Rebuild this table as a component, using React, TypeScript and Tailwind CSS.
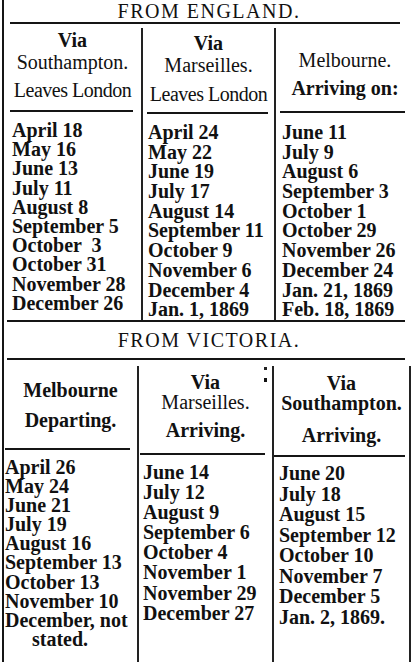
import React from 'react';

const serif = { fontFamily: '"Liberation Serif", "Times New Roman", serif' };

const upperCols = [
  [
    'April 18',
    'May 16',
    'June 13',
    'July 11',
    'August 8',
    'September 5',
    'October  3',
    'October 31',
    'November 28',
    'December 26',
  ],
  [
    'April 24',
    'May 22',
    'June 19',
    'July 17',
    'August 14',
    'September 11',
    'October 9',
    'November 6',
    'December 4',
    'Jan. 1, 1869',
  ],
  [
    'June 11',
    'July 9',
    'August 6',
    'September 3',
    'October 1',
    'October 29',
    'November 26',
    'December 24',
    'Jan. 21, 1869',
    'Feb. 18, 1869',
  ],
];

const lowerCols = [
  [
    'April 26',
    'May 24',
    'June 21',
    'July 19',
    'August 16',
    'September 13',
    'October 13',
    'November 10',
    'December, not',
  ],
  [
    'June 14',
    'July 12',
    'August 9',
    'September 6',
    'October 4',
    'November 1',
    'November 29',
    'December 27',
  ],
  [
    'June 20',
    'July 18',
    'August 15',
    'September 12',
    'October 10',
    'November 7',
    'December 5',
    'Jan. 2, 1869.',
  ],
];

function Rule({ className }: { className: string }) {
  return <div className={`h-[2px] bg-[#151515] ${className}`} />;
}

function Dates({ items, className }: { items: string[]; className: string }) {
  return (
    <div className={`whitespace-pre text-[20px] font-bold ${className}`}>
      {items.map((d) => (
        <div key={d}>{d}</div>
      ))}
    </div>
  );
}

export default function App() {
  return (
    <div className="h-[662px] w-[414px] overflow-hidden bg-white pl-[2px] text-[#111]" style={serif}>
      <div className="flex h-full flex-col border-l-2 border-[#151515]">
        {/* FROM ENGLAND */}
        <div className="h-[22px] text-center text-[20px] leading-[22px] tracking-[1.5px]">FROM ENGLAND.</div>
        <Rule className="ml-[6px] mr-[14px]" />

        <div className="mt-[4px] flex h-[292px]">
          <div className="flex w-[137px] flex-col">
            <div className="h-[82px] pt-[1px] text-center text-[20px] leading-[22px]">
              <div className="font-bold">Via</div>
              <div>Southampton.</div>
              <div className="mt-[6px] tracking-[-0.5px]">Leaves London</div>
            </div>
            <Rule className="ml-[6px] mr-[8px]" />
            <Dates items={upperCols[0]} className="mt-[9px] pl-[8px] leading-[19.2px]" />
          </div>

          <div className="flex w-[133px] flex-col border-l-2 border-[#222]">
            <div className="h-[84px] pt-[4px] text-center text-[20px] leading-[22px]">
              <div className="font-bold">Via</div>
              <div>Marseilles.</div>
              <div className="mt-[7px] tracking-[-0.5px]">Leaves London</div>
            </div>
            <Rule className="ml-[4px] mr-[6px]" />
            <Dates items={upperCols[1]} className="mt-[9px] pl-[5px] leading-[19.7px]" />
          </div>

          <div className="flex flex-1 flex-col border-l-2 border-[#222]">
            <div className="h-[88px] pt-[21px] text-center text-[20px] font-bold leading-[22px]">
              <div className="font-normal">Melbourne.</div>
              <div className="mt-[6px]">Arriving on:</div>
            </div>
            <Rule className="ml-[4px] mr-[9px]" />
            <Dates items={upperCols[2]} className="mt-[10px] pl-[6px] leading-[19.7px]" />
          </div>
        </div>

        <Rule className="ml-[3px] mr-[9px]" />

        {/* FROM VICTORIA */}
        <div className="h-[36px] text-center text-[20px] leading-[36px] tracking-[1.5px]">FROM VICTORIA.</div>
        <Rule className="ml-[3px] mr-[9px]" />

        <div className="mr-[3px] mt-[6px] flex flex-1 border-r-2 border-[#222]">
          <div className="flex w-[133px] flex-col">
            <div className="h-[82px] pt-[13px] text-center text-[20px] font-bold leading-[22px]">
              <div>Melbourne</div>
              <div className="mt-[8px]">Departing.</div>
            </div>
            <Rule className="ml-[1px] mr-[7px]" />
            <div className="mt-[8px] pl-[1px] text-[20px] font-bold leading-[19.1px]">
              {lowerCols[0].map((d) => (
                <div key={d}>{d}</div>
              ))}
              <div className="pl-[27px]">stated.</div>
            </div>
          </div>

          <div className="relative flex w-[135px] flex-col border-l-2 border-[#222]">
            <span className="absolute right-[5px] top-[1px] h-[3px] w-[3px] bg-[#222]" />
            <span className="absolute right-[5px] top-[12px] h-[4px] w-[3px] bg-[#111]" />
            <div className="h-[87px] pt-[6px] text-center text-[20px] leading-[20px]">
              <div className="font-bold">Via</div>
              <div>Marseilles.</div>
              <div className="mt-[8px] font-bold">Arriving.</div>
            </div>
            <Rule className="ml-[1px] mr-[7px]" />
            <Dates items={lowerCols[1]} className="mt-[7px] pl-[4px] leading-[20.1px]" />
          </div>

          <div className="flex flex-1 flex-col border-l-2 border-[#222]">
            <div className="h-[89px] pt-[7px] text-center text-[20px] font-bold leading-[20px]">
              <div>Via</div>
              <div>Southampton.</div>
              <div className="mt-[12px]">Arriving.</div>
            </div>
            <Rule className="mr-[4px]" />
            <Dates items={lowerCols[2]} className="mt-[6px] pl-[5px] leading-[20.5px]" />
          </div>
        </div>
      </div>
    </div>
  );
}
